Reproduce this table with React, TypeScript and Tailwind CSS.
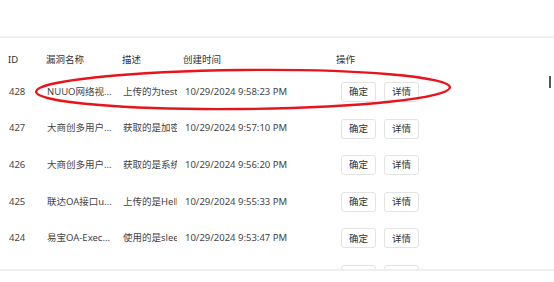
import { FC } from "react";

type Vuln = {
  id: number;
  name: string;
  desc: string;
  created: string;
};

const rows: Vuln[] = [
  { id: 428, name: "NUUO网络视频录像机", desc: "上传的为test", created: "10/29/2024 9:58:23 PM" },
  { id: 427, name: "大商创多用户商城", desc: "获取的是加密", created: "10/29/2024 9:57:10 PM" },
  { id: 426, name: "大商创多用户商城", desc: "获取的是系统", created: "10/29/2024 9:56:20 PM" },
  { id: 425, name: "联达OA接口upload", desc: "上传的是Hello", created: "10/29/2024 9:55:33 PM" },
  { id: 424, name: "易宝OA-ExecuteSql", desc: "使用的是sleep", created: "10/29/2024 9:53:47 PM" },
  { id: 423, name: "金和OA-SQL注入", desc: "使用的是sleep", created: "10/29/2024 9:52:02 PM" },
];

const cols = "grid grid-cols-[38px_76px_61px_153px_1fr] pl-[8px]";

const ActionButton: FC<{ label: string }> = ({ label }) => (
  <button className="h-[20px] w-[35px] rounded-[3px] border border-[#e3e3e3] bg-white text-[9.5px] text-[#333] leading-none">
    {label}
  </button>
);

const App: FC = () => {
  return (
    <div
      className="relative w-[554px] h-[282px] overflow-hidden bg-white text-[9.5px] text-[#444]"
      style={{ fontFamily: '"Noto Sans", "Noto Sans CJK SC", sans-serif' }}
    >
      <div className="h-[36px]" />
      <div className="border-t-2 border-[#f0f0f0]" />

      <div className="h-[231px] overflow-hidden">
        {/* table header */}
        <div className={`${cols} h-[35.7px] pt-[15px] text-[#333] leading-[14px]`}>
          <div>ID</div>
          <div>漏洞名称</div>
          <div>描述</div>
          <div>创建时间</div>
          <div>操作</div>
        </div>

        {rows.map((row) => (
          <div key={row.id} className={`${cols} h-[36.6px] items-center`}>
            <div className="pl-[1px]">{row.id}</div>
            <div className="truncate ml-[1px] mr-[10px]">{row.name}</div>
            <div className="overflow-hidden whitespace-nowrap ml-[1px] mr-[6px]">{row.desc}</div>
            <div className="whitespace-nowrap pl-[2px]">{row.created}</div>
            <div className="flex gap-[8px] pl-[5px]">
              <ActionButton label="确定" />
              <ActionButton label="详情" />
            </div>
          </div>
        ))}
      </div>

      <div className="border-t-2 border-[#f0f0f0]" />

      {/* red marker circling the first row */}
      <svg className="absolute left-0 top-0 pointer-events-none" width="554" height="282">
        <ellipse
          cx="243"
          cy="89.5"
          rx="207"
          ry="19.5"
          transform="rotate(-0.6 243 89.5)"
          fill="none"
          stroke="#e8141c"
          strokeWidth="2.4"
        />
      </svg>

      {/* text caret */}
      <div className="absolute left-[549px] top-[76px] h-[12px] w-[2px] bg-[#555]" />
    </div>
  );
};

export default App;
